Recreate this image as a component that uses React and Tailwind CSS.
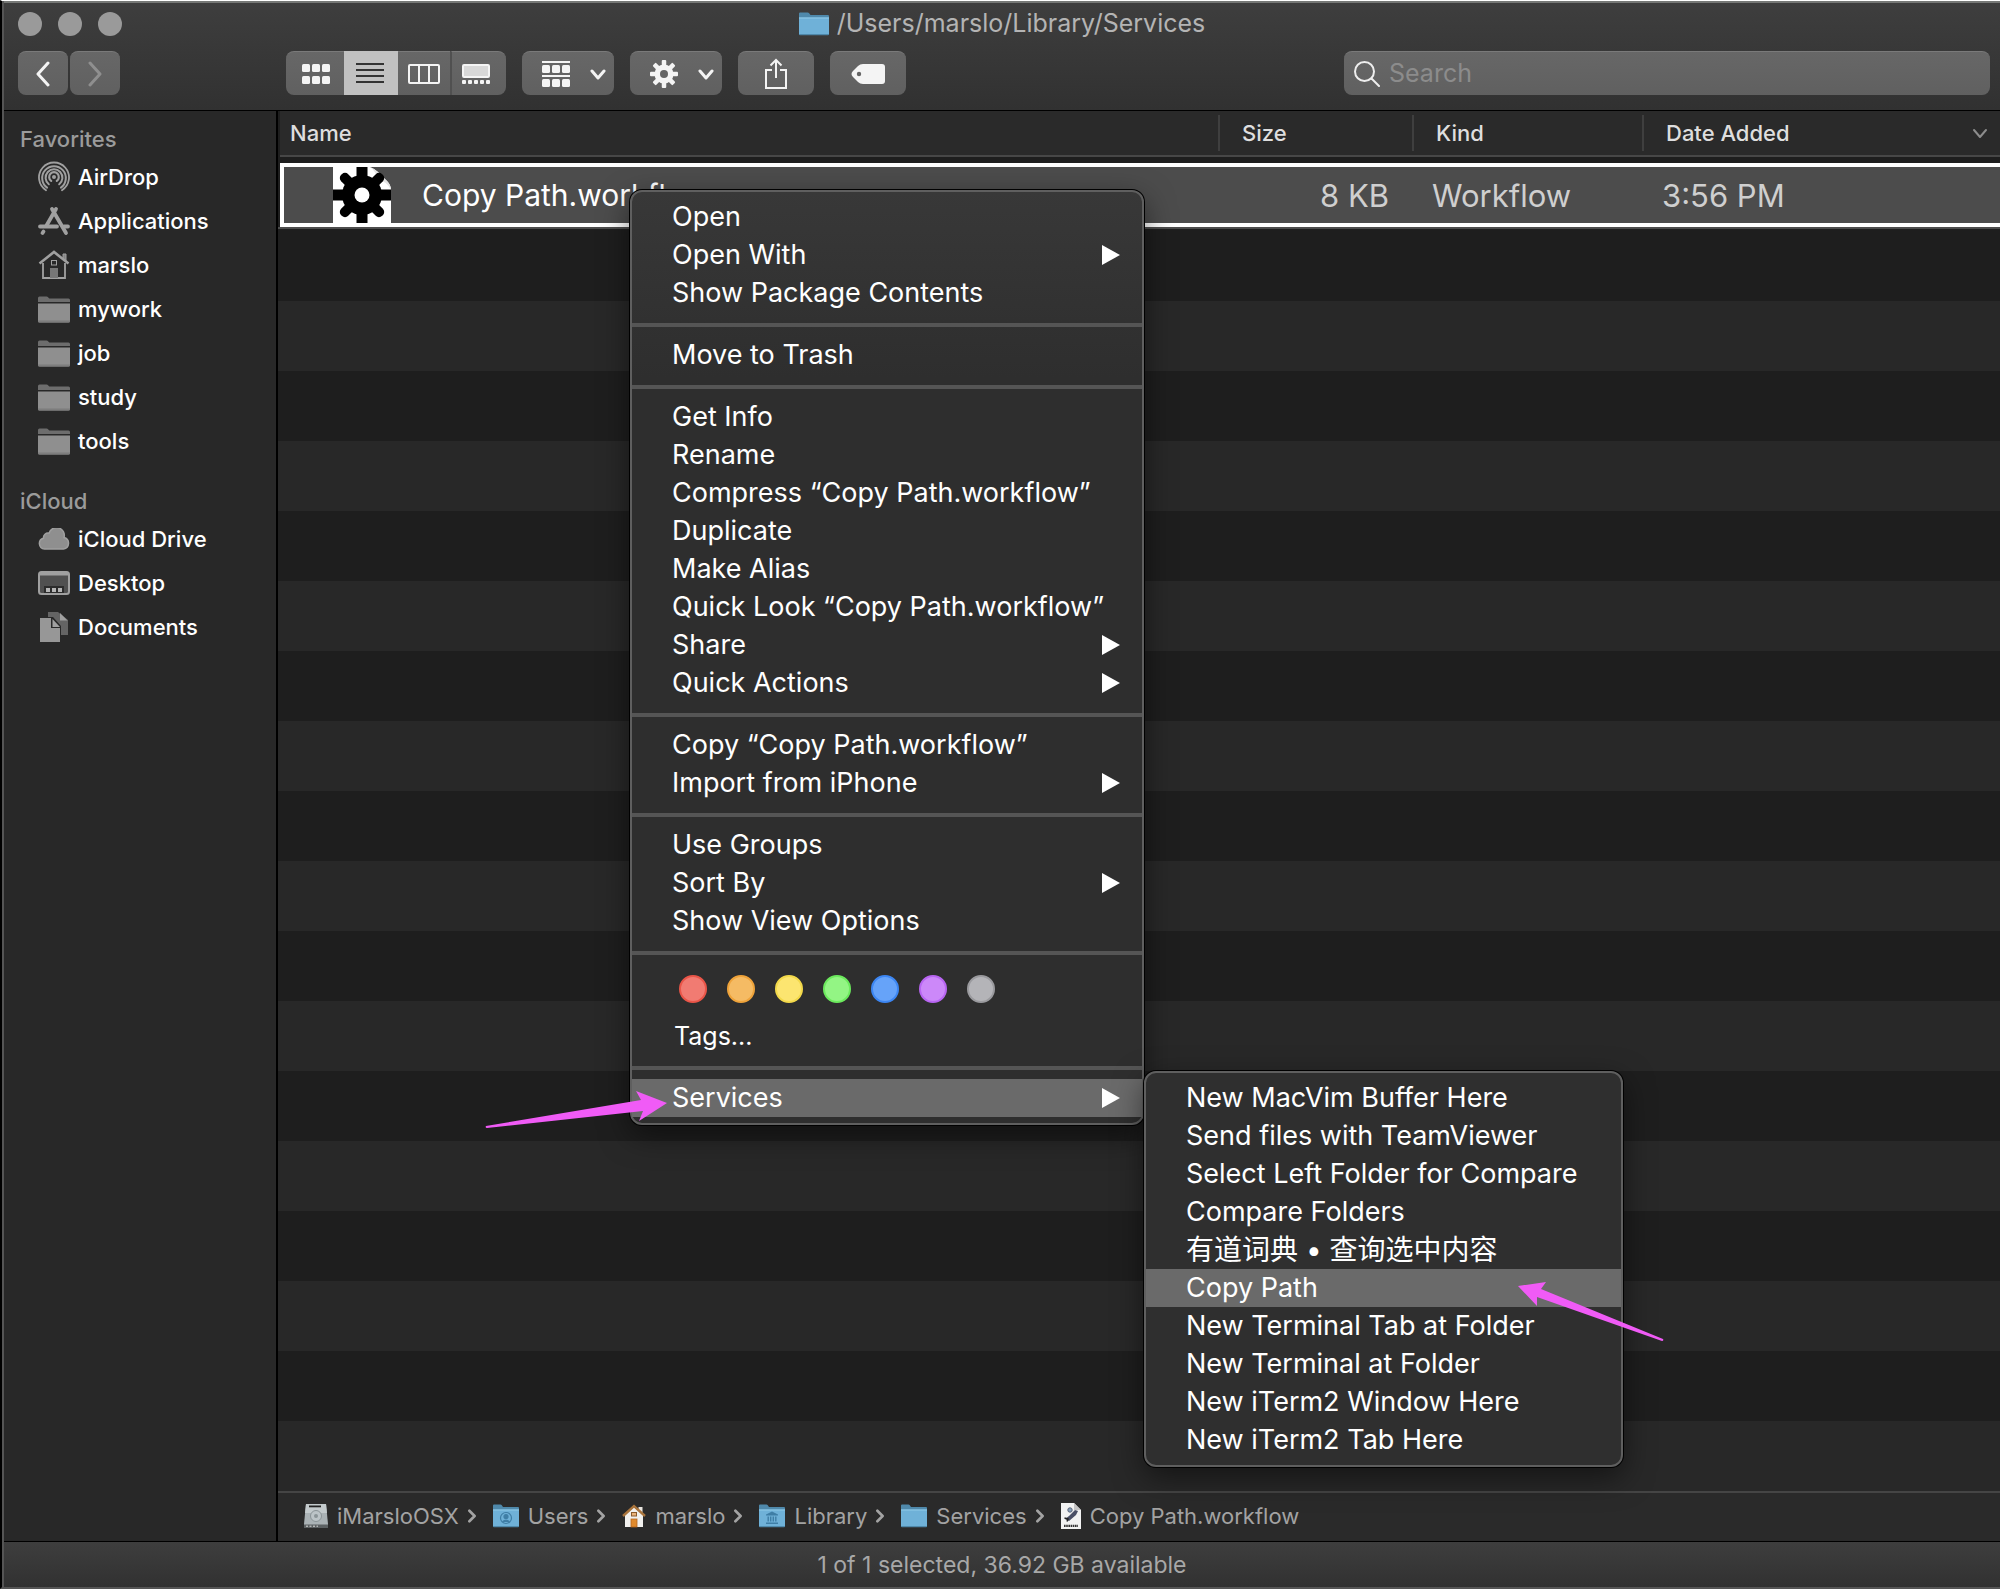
const gradBar = "bg-linear-to-b from-[#3e3e3e] to-[#313131]";
const btn = "flex h-11 items-center justify-center rounded-lg border-t border-[#7a7a7a] bg-linear-to-b from-[#676767] to-[#606060] text-[#f4f4f4]";

function GearPath({ teeth = 8, r = 10, inner = 4, toothW = 4, toothR = 14, fill = "currentColor", hole = "#646464" }) {
  const items = Array.from({ length: teeth }, (_, i) => (i * 360) / teeth);
  return (
    <g>
      {items.map((a) => (
        <rect key={a} x={-toothW / 2} y={-toothR} width={toothW} height={toothR} rx="1" fill={fill} transform={`rotate(${a})`} />
      ))}
      <circle r={r} fill={fill} />
      <circle r={inner} fill={hole} />
    </g>
  );
}

function Chevron({ className, dir = "down", w = 16, sw = 3 }) {
  const d = { down: "M2 5l6 7 6-7", right: "M5 2l6 6-6 6" }[dir];
  return (
    <svg className={className} width={w} height={w} viewBox="0 0 16 16" fill="none" stroke="currentColor" strokeWidth={sw} strokeLinecap="round" strokeLinejoin="round" aria-hidden="true">
      <path d={d} />
    </svg>
  );
}

function NavArrow({ left }) {
  return (
    <svg width="18" height="26" viewBox="0 0 18 26" fill="none" stroke="currentColor" strokeWidth="3" strokeLinecap="round" strokeLinejoin="round" aria-hidden="true">
      <path d={left ? "M14 2L4 13l10 11" : "M4 2l10 11L4 24"} />
    </svg>
  );
}

function IconGrid() {
  return (
    <svg width="28" height="20" viewBox="0 0 28 20" fill="currentColor" aria-hidden="true">
      {[0, 10, 20].map((x) => [0, 12].map((y) => <rect key={`${x}-${y}`} x={x} y={y} width="8" height="8" rx="1.5" />))}
    </svg>
  );
}

function IconList() {
  return (
    <svg width="28" height="20" viewBox="0 0 28 20" fill="#333" aria-hidden="true">
      {[0, 6, 12, 18].map((y) => <rect key={y} y={y} width="28" height="2" />)}
    </svg>
  );
}

function IconColumns() {
  return (
    <svg width="32" height="20" viewBox="0 0 32 20" fill="none" stroke="currentColor" strokeWidth="2" aria-hidden="true">
      <rect x="1" y="1" width="30" height="18" rx="1" />
      <path d="M11 1v18M21 1v18" />
    </svg>
  );
}

function IconGallery() {
  return (
    <svg width="28" height="20" viewBox="0 0 28 20" aria-hidden="true">
      <rect x="1" y="1" width="26" height="12" rx="1" fill="#d8d8d8" stroke="#f4f4f4" strokeWidth="2" />
      {[0, 6, 12, 18, 24].map((x) => <rect key={x} x={x} y="16" width="4" height="4" rx="1" fill="#f4f4f4" />)}
    </svg>
  );
}

function IconGroup() {
  return (
    <svg width="28" height="26" viewBox="0 0 28 26" fill="currentColor" aria-hidden="true">
      <rect width="28" height="2" />
      <rect y="14" width="28" height="2" />
      {[0, 10, 20].map((x) => [4, 18].map((y) => <rect key={`${x}-${y}`} x={x} y={y} width="8" height="8" rx="1.5" />))}
    </svg>
  );
}

function FolderGray() {
  return (
    <svg width="32" height="27" viewBox="0 0 32 27" aria-hidden="true">
      <path d="M0 6V2q0-1.500 1.500-1.500h7q1 0 1.800 1l1 1H30.500Q32 2.500 32 4v2z" fill="#6d6d6d" />
      <path d="M0 7.500h32V25q0 1.500-1.500 1.500h-29Q0 26.500 0 25z" fill="#8f8f8f" />
      <path d="M0 24.500h32V25q0 1.500-1.500 1.500h-29Q0 26.500 0 25z" fill="#7d7d7d" />
    </svg>
  );
}

function AirDrop() {
  return (
    <svg width="32" height="32" viewBox="0 0 32 32" fill="none" stroke="#a0a0a0" strokeWidth="2.200" strokeLinecap="round" aria-hidden="true">
      <circle cx="16" cy="16" r="2" fill="#a0a0a0" stroke="none" />
      <path d="M13.200 19.900a4.800 4.800 0 1 1 5.600 0" />
      <path d="M10.800 23.300a8.400 8.400 0 1 1 10.400 0" strokeWidth="2" />
      <path d="M9.100 26.600a11.800 11.800 0 1 1 13.800 0" strokeWidth="2" />
      <path d="M8 29.200a15 15 0 1 1 16 0" strokeWidth="1.800" />
    </svg>
  );
}

function AppStore() {
  return (
    <svg width="32" height="30" viewBox="0 0 32 30" fill="none" stroke="#a0a0a0" strokeWidth="3.800" strokeLinecap="round" aria-hidden="true">
      <path d="M18 3L8.500 19.500" />
      <path d="M14 3L28 27" />
      <path d="M2 20.500h17M26 20.500h4" />
      <path d="M5.500 25.500L4.500 27" />
    </svg>
  );
}

function HouseGray() {
  return (
    <svg width="32" height="30" viewBox="0 0 32 30" aria-hidden="true">
      <path d="M25 4h3v7l-3-3z" fill="#858585" stroke="#a0a0a0" />
      <path d="M5 13v15h22V13" fill="none" stroke="#a0a0a0" strokeWidth="1.800" />
      <path d="M1.500 13.500L16 2l14.500 11.500" fill="none" stroke="#a0a0a0" strokeWidth="2.600" />
      <rect x="13.500" y="10.500" width="5" height="4.500" fill="none" stroke="#a0a0a0" />
      <rect x="12" y="18" width="8" height="10" fill="#777" />
    </svg>
  );
}

function Cloud() {
  return (
    <svg width="32" height="22" viewBox="0 0 32 22" aria-hidden="true">
      <path d="M6.500 21a5.500 5.500 0 0 1-1-10.800A4.600 4.600 0 0 1 11 5.200 7.700 7.700 0 0 1 26 9.600 5.800 5.800 0 0 1 25.500 21z" fill="#8f8f8f" stroke="#a0a0a0" strokeWidth="1.500" />
    </svg>
  );
}

function DesktopIcon() {
  return (
    <svg width="32" height="24" viewBox="0 0 32 24" aria-hidden="true">
      <rect x="1" y="1" width="30" height="22" rx="2.500" fill="#505050" stroke="#a0a0a0" strokeWidth="2" />
      <rect x="1.500" y="1.500" width="29" height="3" fill="#a0a0a0" />
      <rect x="6" y="15" width="20" height="7" fill="#2c2c2c" />
      {[8, 14, 20].map((x) => <rect key={x} x={x} y="17" width="4" height="4" fill="#b5b5b5" />)}
    </svg>
  );
}

function DocsIcon() {
  return (
    <svg width="32" height="30" viewBox="0 0 32 30" aria-hidden="true">
      <path d="M10 0h10l10 8v15h-7V14l-8-9h-5z" fill="#646464" />
      <path d="M22 1l7.500 7.500H22z" fill="#a0a0a0" />
      <path d="M2 6h11v10h9v14H2z" fill="#979797" />
      <path d="M14.500 7l7.500 8h-7.500z" fill="#a0a0a0" />
    </svg>
  );
}

function BlueFolder({ mark, w = 26, h = 24 }) {
  return (
    <svg width={w} height={h} viewBox="0 0 26 24" preserveAspectRatio="none" aria-hidden="true">
      <path d="M0 6V1.500Q0 .5 1 .5h6.500q.8 0 1.300.8L10 3h15q1 0 1 1v3H0z" fill="#4f89ab" />
      <path d="M0 5.500h26V22q0 1-1 1H1q-1 0-1-1z" fill="#6fb1d8" />
      <path d="M0 5.500h26v1H0z" fill="#93cbe9" />
      <path d="M0 22h26q0 1.200-1 1.200H1Q0 23.200 0 22z" fill="#4f89ab" />
      {mark === "user" && (
        <g fill="none" stroke="#3f7ea6" strokeWidth="1.200">
          <circle cx="13" cy="14" r="5.500" />
          <circle cx="13" cy="12.500" r="2" fill="#3f7ea6" />
          <path d="M9.500 18q3.500-4 7 0" fill="#3f7ea6" />
        </g>
      )}
      {mark === "library" && (
        <g fill="#3f7ea6">
          <path d="M13 7.500l6 3v1H7v-1z" />
          <path d="M8.500 12.500h1.400v5H8.500zM11 12.500h1.400v5H11zM13.600 12.500H15v5h-1.400zM16.100 12.500h1.400v5h-1.400zM7 18.500h12V20H7z" />
        </g>
      )}
    </svg>
  );
}

function DriveIcon() {
  return (
    <svg width="24" height="25" viewBox="0 0 24 25" aria-hidden="true">
      <path d="M2 0h20l2 20v4H0v-4z" fill="#aab2b5" />
      <path d="M2 0h20l1 9H1z" fill="#c3cacc" />
      <rect x="5" y="1.500" width="12" height="1.800" fill="#222" />
      <circle cx="12" cy="12" r="5.500" fill="#bcc4c7" stroke="#8b9497" />
      <circle cx="12" cy="12" r="2" fill="#8b9497" />
      <path d="M0 20.500h24V24H0z" fill="#5c6163" />
      <path d="M2 22.200h12" stroke="#ddd" strokeDasharray="2 1.500" />
    </svg>
  );
}

function HouseColor() {
  return (
    <svg width="24" height="24" viewBox="0 0 24 24" aria-hidden="true">
      <path d="M16.500 3h4v7h-4z" fill="#e9e5df" />
      <path d="M3 11l9-8 9 8v12H3z" fill="#f1f0ee" />
      <path d="M1 12L12 2l11 10" fill="none" stroke="#a9743c" strokeWidth="2.400" />
      <rect x="9.500" y="8.500" width="5" height="3.500" fill="#e9b27a" stroke="#8a5b2c" />
      <rect x="9" y="15" width="6" height="8" fill="#e08a2d" stroke="#b5651d" strokeWidth=".8" />
    </svg>
  );
}

function DocColor() {
  return (
    <svg width="20" height="26" viewBox="0 0 20 26" aria-hidden="true">
      <path d="M0 0h13l7 7v19H0z" fill="#f2f2f2" />
      <path d="M13 0l7 7h-7z" fill="#c4c4c4" />
      <path d="M4 16l4-3 6-6 3 1-2 4-7 6z" fill="#4a4f66" />
      <circle cx="9" cy="7" r="2.200" fill="#8aa4bd" stroke="#5b6378" />
      <path d="M3.500 15l3.500 1-1 2.500" stroke="#222" strokeWidth="1.500" fill="none" />
      <path d="M3 22.800h14" stroke="#333" strokeWidth="2.200" strokeDasharray="1.600 .6" />
    </svg>
  );
}

function WorkflowIcon() {
  return (
    <svg width="58" height="56" viewBox="0 0 58 56" aria-hidden="true">
      <path d="M0 0h37q5 2 8 5l9 9q4 4 4 9v33H0z" fill="#fff" />
      <path d="M37 0q5 2 8 5l9 9q4 4 4 9-4-9-13-10Q43 4 37 0z" fill="#e4e4e4" />
      <g transform="translate(29 28)" fill="#000">
        {[0, 45, 90, 135, 180, 225, 270, 315].map((a) => (
          <rect key={a} x={a % 90 ? -5 : -5.5} y={a % 90 ? -29 : -30} width={a % 90 ? 10 : 11} height="20" rx={a % 90 ? 4.5 : 1} transform={`rotate(${a})`} />
        ))}
        <circle r="20" />
        <circle r="7.500" fill="#fff" />
      </g>
    </svg>
  );
}

const favorites = [
  ["AirDrop", AirDrop],
  ["Applications", AppStore],
  ["marslo", HouseGray],
  ["mywork", FolderGray],
  ["job", FolderGray],
  ["study", FolderGray],
  ["tools", FolderGray],
];
const icloud = [
  ["iCloud Drive", Cloud],
  ["Desktop", DesktopIcon],
  ["Documents", DocsIcon],
];

function SidebarGroup({ title, items }) {
  return (
    <section className="mb-[22px]">
      <h2 className="pl-4 text-[22px] leading-8 font-medium text-[#9b9b9b]">{title}</h2>
      <ul>
        {items.map(([label, Icon]) => (
          <li key={label}>
            <a href="#" className="flex h-11 items-center gap-2 pl-[34px] text-[22px] font-medium text-white">
              <Icon />
              {label}
            </a>
          </li>
        ))}
      </ul>
    </section>
  );
}

const menuGroups = [
  [["Open"], ["Open With", true], ["Show Package Contents"]],
  [["Move to Trash"]],
  [["Get Info"], ["Rename"], ["Compress “Copy Path.workflow”"], ["Duplicate"], ["Make Alias"], ["Quick Look “Copy Path.workflow”"], ["Share", true], ["Quick Actions", true]],
  [["Copy “Copy Path.workflow”"], ["Import from iPhone", true]],
  [["Use Groups"], ["Sort By", true], ["Show View Options"]],
];
const tagColors = [
  ["Red", "bg-[#f17b72] border-[#ea5548]"],
  ["Orange", "bg-[#f5bb64] border-[#efa33a]"],
  ["Yellow", "bg-[#fce570] border-[#f3d94a]"],
  ["Green", "bg-[#93f584] border-[#6bea5c]"],
  ["Blue", "bg-[#66a3f9] border-[#3c86f3]"],
  ["Purple", "bg-[#cc88f9] border-[#b865f2]"],
  ["Gray", "bg-[#b4b4b8] border-[#9a9a9e]"],
];
const services = [
  "New MacVim Buffer Here",
  "Send files with TeamViewer",
  "Select Left Folder for Compare",
  "Compare Folders",
  "有道词典 • 查询选中内容",
  "Copy Path",
  "New Terminal Tab at Folder",
  "New Terminal at Folder",
  "New iTerm2 Window Here",
  "New iTerm2 Tab Here",
];

function MenuItem({ label, arrow, active, large }) {
  return (
    <button
      type="button"
      role="menuitem"
      className={`flex h-[38px] w-full items-center justify-between pr-[22px] pl-10 text-left leading-[38px] whitespace-nowrap text-white ${large ? "text-[28px]" : "text-[27px]"} ${active ? "bg-[#6a6a6a]" : ""}`}
    >
      {label}
      {arrow && (
        <svg width="18" height="20" viewBox="0 0 18 20" fill="currentColor" aria-hidden="true">
          <path d="M0 0l18 10L0 20z" />
        </svg>
      )}
    </button>
  );
}

const Separator = () => <div role="separator" className="mt-[11px] mb-[9px] h-1 bg-[#555]" />;
const menuBox = "rounded-xl border-2 border-[#5f5f5f] bg-[#2f2f2f] py-1.5 shadow-[0_0_0_1px_#000,0_10px_30px_rgba(0,0,0,0.5)]";

function ContextMenu() {
  return (
    <div role="menu" aria-label="File actions" className={`absolute top-[189px] left-[628px] w-[514px] bg-linear-to-b from-[#383838] to-[#2e2e2e] to-20% ${menuBox}`}>
      {menuGroups.map((group) => (
        <div key={group[0][0]}>
          {group.map(([label, arrow]) => <MenuItem key={label} label={label} arrow={arrow} />)}
          <Separator />
        </div>
      ))}
      <div className="flex gap-5 pt-[11px] pl-[47px]">
        {tagColors.map(([name, cls]) => <button key={name} type="button" aria-label={name} className={`size-7 rounded-full border-2 ${cls}`} />)}
      </div>
      <button type="button" className="mt-3.5 block pl-[42px] text-[25px] leading-[38px] text-white">Tags...</button>
      <Separator />
      <MenuItem label="Services" arrow active />
      <div role="menu" aria-label="Services" className={`absolute top-[879px] left-[512px] w-[479px] ${menuBox}`}>
        {services.map((s) => <MenuItem key={s} label={s} active={s === "Copy Path"} large={s.startsWith("有")} />)}
      </div>
    </div>
  );
}

const crumbs = [
  ["iMarsloOSX", <DriveIcon />],
  ["Users", <BlueFolder mark="user" />],
  ["marslo", <HouseColor />],
  ["Library", <BlueFolder mark="library" />],
  ["Services", <BlueFolder />],
  ["Copy Path.workflow", <DocColor />],
];

function Toolbar() {
  return (
    <div className="flex items-center px-[14px] pt-1.5">
      <div className="flex w-[268px] gap-0.5">
        <button type="button" aria-label="Back" className={`${btn} w-[50px]`}><NavArrow left /></button>
        <button type="button" aria-label="Forward" className={`${btn} w-[50px]`}><span className="text-[#8f8f8f]"><NavArrow /></span></button>
      </div>
      <div className="flex gap-4">
        <div className="flex">
          <button type="button" aria-label="Icon view" className={`${btn} w-[58px] rounded-r-none pl-0.5`}><IconGrid /></button>
          <button type="button" aria-label="List view" className="flex h-11 w-[54px] items-center justify-center bg-[#c1c1c1] pr-0.5"><IconList /></button>
          <button type="button" aria-label="Column view" className={`${btn} w-[52px] rounded-none`}><IconColumns /></button>
          <button type="button" aria-label="Gallery view" className={`${btn} w-[56px] rounded-l-none border-l-2 border-l-[#505050] pr-1.5`}><IconGallery /></button>
        </div>
        <button type="button" aria-label="Group items" className={`${btn} w-[92px] gap-5 pl-3`}><IconGroup /><Chevron /></button>
        <button type="button" aria-label="Actions" className={`${btn} w-[92px] gap-5 pl-3`}>
          <svg width="28" height="28" viewBox="-14 -14 28 28" aria-hidden="true"><GearPath toothW={4.5} r={9.5} /></svg>
          <Chevron />
        </button>
        <button type="button" aria-label="Share" className={`${btn} w-[76px]`}>
          <svg width="24" height="32" viewBox="0 0 24 32" fill="none" stroke="currentColor" strokeWidth="2" aria-hidden="true">
            <path d="M8 12H2v18h20V12h-6M12 20V2M6.500 7.500L12 2l5.500 5.500" />
          </svg>
        </button>
        <button type="button" aria-label="Tags" className={`${btn} w-[76px]`}>
          <svg width="34" height="20" viewBox="0 0 34 20" aria-hidden="true">
            <path d="M12 0h19q3 0 3 3v14q0 3-3 3H12q-3 0-5-2l-5-5q-3-3 0-6l5-5q2-2 5-2z" fill="#f4f4f4" />
            <circle cx="8" cy="10" r="2.200" fill="#646464" />
          </svg>
        </button>
      </div>
      <label className={`${btn} -mr-1 ml-auto w-[646px] gap-[9px] px-2.5`}>
        <svg width="26" height="26" viewBox="0 0 26 26" fill="none" stroke="#eee" strokeWidth="2" strokeLinecap="round" aria-hidden="true">
          <circle cx="10.500" cy="10.500" r="9.500" />
          <path d="M17.500 17.500L25 25" />
        </svg>
        <input type="search" aria-label="Search" placeholder="Search" className="min-w-0 flex-1 bg-transparent text-[25px] outline-none placeholder:text-[#8c8c8c]" />
      </label>
    </div>
  );
}

const headText = "text-left align-middle text-[22px] font-medium text-[#dedede]";

function FileTable() {
  return (
    <div className="pl-0.5">
      <table className="w-full table-fixed border-separate border-spacing-0">
        <colgroup>
          <col />
          <col className="w-[194px]" />
          <col className="w-[230px]" />
          <col className="w-[358px]" />
        </colgroup>
        <thead>
          <tr className="h-[46px] bg-[#2a2a2a]">
            <th scope="col" className={`${headText} border-b-2 border-[#474747] pl-2.5`}>Name</th>
            {["Size", "Kind", "Date Added"].map((h) => (
              <th key={h} scope="col" className={`${headText} border-b-2 border-[#474747] p-0`}>
                <div className="flex h-9 items-center justify-between border-l-2 border-[#3f3f3f] pr-3 pl-[22px]">
                  {h}
                  {h === "Date Added" && <Chevron className="text-[#8c8c8c]" sw={2} />}
                </div>
              </th>
            ))}
          </tr>
        </thead>
        <tbody>
          <tr aria-hidden="true" className="h-1.5"><td colSpan={4} className="p-0" /></tr>
          <tr className="h-16 bg-[#4c4c4c] text-[31px] text-[#cfcfcf]">
            <td className="border-y-4 border-l-4 border-white p-0 pl-[49px]">
              <div className="flex h-14 items-center gap-[31px] text-[30px] text-white"><WorkflowIcon />Copy Path.workflow</div>
            </td>
            <td className="border-y-4 border-white p-0 pr-[23px] text-right leading-none">8 KB</td>
            <td className="border-y-4 border-white p-0 pl-5 leading-none">Workflow</td>
            <td className="border-y-4 border-white p-0 pl-5 leading-none">3:56 PM</td>
          </tr>
        </tbody>
      </table>
      <div className="-ml-0.5 h-1 border-t-2 border-[#4c4c4c]" />
    </div>
  );
}

function Arrows() {
  return (
    <>
      <svg className="pointer-events-none absolute top-[1087px] left-[482px]" width="186" height="42" viewBox="0 0 186 42" fill="#f05bf6" aria-hidden="true">
        <path d="M183 15L152 3l5 9L2 38q-1 2 1 2l156-17-4 10z" />
      </svg>
      <svg className="pointer-events-none absolute top-[1277px] left-[1514px]" width="150" height="66" viewBox="0 0 150 66" fill="#f05bf6" aria-hidden="true">
        <path d="M2 8l28-4-5 7L147 61q1 2-1 2L21 19v9z" />
      </svg>
    </>
  );
}

export default function App() {
  return (
    <div className="relative flex min-h-screen flex-col overflow-hidden border-t border-b-2 border-l-2 border-t-white border-b-[#555] border-l-black bg-black font-[Inter,'Noto_Sans_CJK_SC',sans-serif] text-white">
      <div className="flex flex-1 flex-col border-l-2 border-[#555]">
        <header className={`h-[110px] border-t-2 border-b border-t-[#767876] border-b-black ${gradBar}`}>
          <div className="flex h-[42px] items-center">
            <div className="flex w-[110px] gap-4 pl-[14px]">
              {["Close", "Minimize", "Zoom"].map((n) => <button key={n} type="button" aria-label={n} className="size-6 shrink-0 rounded-full bg-[#9a9a9a]" />)}
            </div>
            <h1 className="flex flex-1 items-center justify-center gap-2 pr-[110px] text-[25px] text-[#b4b4b4]">
              <BlueFolder w={30} h={24} />
              /Users/marslo/Library/Services
            </h1>
          </div>
          <Toolbar />
        </header>
        <div className="flex flex-1">
          <nav aria-label="Sidebar" className="w-[274px] shrink-0 border-r-2 border-black bg-[#282828] pt-3">
            <SidebarGroup title="Favorites" items={favorites} />
            <SidebarGroup title="iCloud" items={icloud} />
          </nav>
          <main className="flex min-w-0 flex-1 flex-col bg-[#1e1e1e]">
            <FileTable />
            <div className="flex-1 bg-[repeating-linear-gradient(#1e1e1e_0_70px,#282828_70px_140px)]" />
            <nav aria-label="Path" className="flex h-[50px] items-center border-t-2 border-[#454545] bg-[#2a2a2a] pb-0.5 pl-[26px] text-[22px] text-[#a3a3a3]">
              {crumbs.map(([label, icon], i) => (
                <span key={label} className="flex items-center">
                  {i > 0 && <Chevron dir="right" w={14} sw={3} className="mr-3.5 ml-1.5" />}
                  <a href="#" className="flex items-center gap-[9px]">{icon}{label}</a>
                </span>
              ))}
            </nav>
          </main>
        </div>
        <footer className={`flex h-[46px] items-center justify-center border-t border-black pt-0.5 text-[23px] text-[#a8a8a8] ${gradBar}`}>1 of 1 selected, 36.92 GB available</footer>
      </div>
      <ContextMenu />
      <Arrows />
    </div>
  );
}
